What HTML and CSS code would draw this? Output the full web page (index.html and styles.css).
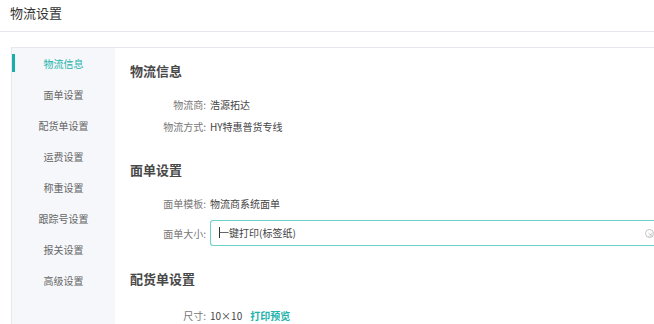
FILE: index.html
```html
<!DOCTYPE html>
<html lang="zh-CN">
<head>
    <meta charset="UTF-8">
    <title>物流设置</title>
    <link rel="stylesheet" href="styles.css">
</head>
<body>
    <div class="page-title">物流设置</div>

    <div class="panel">
        <!-- 左侧菜单 -->
        <ul class="side-menu">
            <li class="active">物流信息</li>
            <li>面单设置</li>
            <li>配货单设置</li>
            <li>运费设置</li>
            <li>称重设置</li>
            <li>跟踪号设置</li>
            <li>报关设置</li>
            <li>高级设置</li>
        </ul>

        <!-- 右侧内容 -->
        <div class="content">
            <div class="section first">
                <h3>物流信息</h3>
                <div class="row"><label>物流商:</label><span>浩源拓达</span></div>
                <div class="row"><label>物流方式:</label><span>HY特惠普货专线</span></div>
            </div>

            <div class="section">
                <h3>面单设置</h3>
                <div class="row"><label>面单模板:</label><span>物流商系统面单</span></div>
                <div class="row input-row">
                    <label>面单大小:</label>
                    <div class="select-box">
                        <span class="caret"></span>一键打印(标签纸)
                        <i class="clear"></i>
                    </div>
                </div>
            </div>

            <div class="section">
                <h3>配货单设置</h3>
                <div class="row size-row"><label>尺寸:</label><span>10×10</span><a class="link">打印预览</a></div>
            </div>
        </div>
    </div>
</body>
</html>
```

FILE: styles.css
```css
/* 页面基础 */
html, body {
    margin: 0;
    height: 100%;
    overflow: hidden;
}
body {
    font-family: "Noto Sans CJK SC", "Noto Sans", sans-serif;
    color: #333;
    background: #fff;
}
.page-title {
    height: 31px;
    line-height: 26px;
    padding-left: 10px;
    font-size: 13px;
    color: #333;
    border-bottom: 1px solid #e6e8ee;
}
.panel {
    display: flex;
    margin: 15px 0 0 11px;
    border-top: 1px solid #e6e8ee;
    border-left: 1px solid #e6e8ee;
    height: 276px;
    overflow: hidden;
}
.side-menu {
    list-style: none;
    margin: 0;
    padding: 0;
    width: 103px;
    background: #f5f7fa;
}
.side-menu li {
    position: relative;
    height: 31px;
    line-height: 31px;
    text-align: center;
    font-size: 10px;
    color: #666;
}
.side-menu li.active {
    color: #1db3ab;
}
.side-menu li.active::before {
    content: "";
    position: absolute;
    left: 0;
    top: 6px;
    width: 3px;
    height: 18px;
    background: #1aaea6;
}
.content {
    flex: 1;
    min-width: 0;
    padding-left: 15px;
}
.section h3 {
    margin: 0 0 12px;
    height: 20px;
    line-height: 20px;
    font-size: 13px;
    font-weight: 600;
    color: #484848;
}
.section {
    margin-top: 23px;
}
.section.first {
    margin-top: 13px;
}
.row {
    display: flex;
    align-items: center;
    height: 22px;
    font-size: 10px;
    color: #444;
}
.row label {
    width: 76px;
    text-align: right;
    color: #777;
    margin-right: 4px;
}
.input-row {
    height: 26px;
    margin-top: 6px;
}
.select-box {
    position: relative;
    flex: 1;
    box-sizing: border-box;
    height: 26px;
    line-height: 24px;
    padding-left: 8px;
    border: 1px solid #6fd0cb;
    border-right: none;
    border-radius: 3px 0 0 3px;
    color: #444;
}
.caret {
    display: inline-block;
    width: 1px;
    height: 11px;
    background: #333;
    vertical-align: -1px;
    margin-right: -1px;
}
.clear {
    position: absolute;
    right: 0;
    top: 8px;
    width: 7px;
    height: 7px;
    border: 1px solid #c4c4c4;
    border-radius: 50%;
}
.clear::after {
    content: "×";
    position: absolute;
    left: 1px;
    top: -8px;
    font-size: 7px;
    font-style: normal;
    color: #aaa;
}
.section:last-child h3 {
    margin-bottom: 15px;
}
.size-row .link {
    margin-left: 8px;
    color: #1db3ab;
    font-weight: 600;
}
```
